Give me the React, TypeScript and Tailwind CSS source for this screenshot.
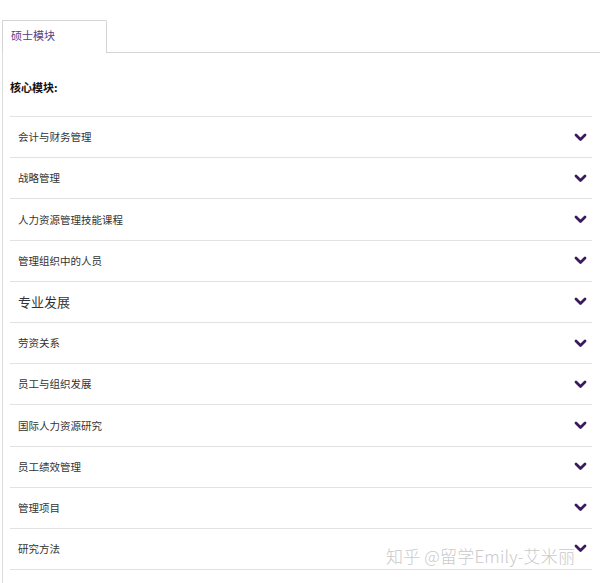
import React from "react";

const modules = [
  { title: "会计与财务管理" },
  { title: "战略管理" },
  { title: "人力资源管理技能课程" },
  { title: "管理组织中的人员" },
  { title: "专业发展", big: true },
  { title: "劳资关系" },
  { title: "员工与组织发展" },
  { title: "国际人力资源研究" },
  { title: "员工绩效管理" },
  { title: "管理项目" },
  { title: "研究方法" },
];

function Chevron() {
  return (
    <svg width="13" height="9" viewBox="0 0 13 9" className="shrink-0">
      <path d="M2 2 L6.5 6.4 L11 2" fill="none" stroke="#3a1a5c" strokeWidth="2.8" strokeLinecap="round" strokeLinejoin="round" />
    </svg>
  );
}

export default function App() {
  return (
    <div
      className="relative w-[600px] h-[583px] overflow-hidden bg-white"
      style={{ fontFamily: '"Noto Sans CJK SC", "Noto Sans", sans-serif' }}
    >
      <div className="flex pt-[20px] h-[53px]">
        <div className="ml-[2px] w-[105px] h-[33px] border border-b-0 border-[#d4d4d4] rounded-tr-[2px] bg-white flex items-center pl-[8px] pb-[3px]">
          <span className="text-[11px] text-[#5a3d86]">硕士模块</span>
        </div>
        <div className="flex-1 border-b border-[#d4d4d4]" />
      </div>

      <div className="ml-[2px] border-l border-[#dcdcdc] h-[530px]">
        <div className="pl-[7px] pt-[20px] h-[63px]">
          <span className="text-[11px] font-bold text-[#111]">核心模块:</span>
        </div>
        <div className="ml-[7px] mr-[8px] border-b border-[#e2e2e2]">
          {modules.map((m) => (
            <div
              key={m.title}
              className="h-[41.2px] box-border border-t border-[#e2e2e2] flex items-center justify-between pl-[8px] pr-[5px]"
            >
              <span className={m.big ? "text-[13px] text-[#333]" : "text-[10.5px] text-[#333]"}>{m.title}</span>
              <Chevron />
            </div>
          ))}
        </div>
      </div>

      <div
        className="absolute left-[386px] top-[543px] text-[17px] font-light text-[#cacaca] tracking-[0.2px]"
        style={{ textShadow: "0 0 2px #fff" }}
      >
        知乎 @留学Emily-艾米丽
      </div>
    </div>
  );
}
